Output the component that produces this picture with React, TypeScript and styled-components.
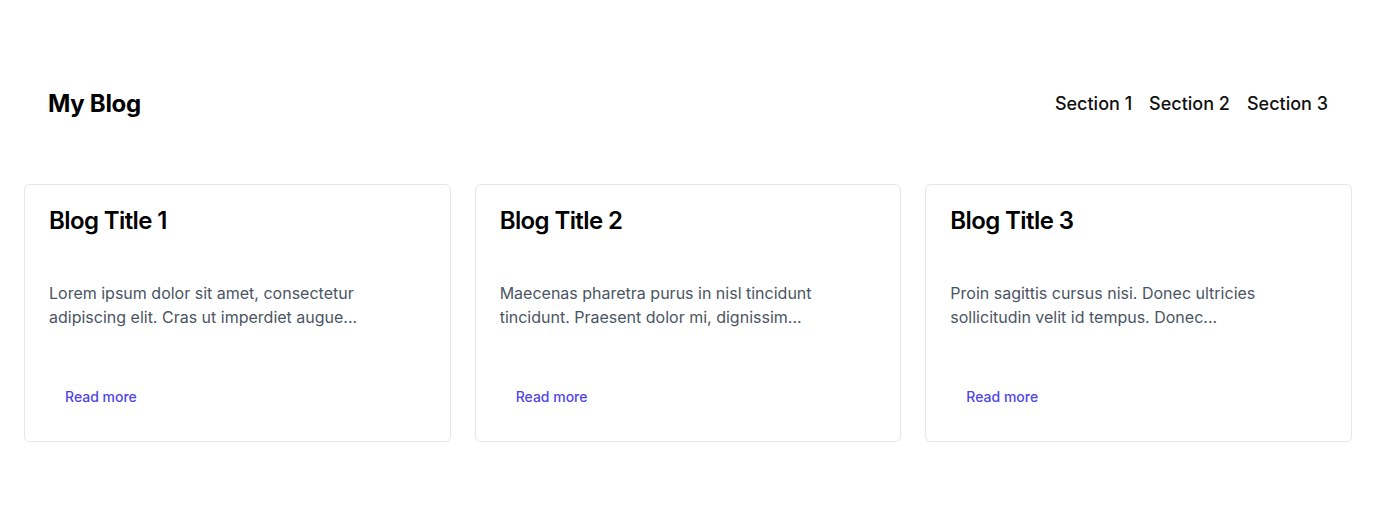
import React from "react";
import styled, { createGlobalStyle } from "styled-components";

const Global = createGlobalStyle`
  html, body { margin: 0; padding: 0; background: #ffffff; }
  body { font-family: Inter, "Noto Sans", sans-serif; color: #111; -webkit-font-smoothing: antialiased; }
  * { box-sizing: border-box; }
`;

const Page = styled.div`
  padding: 64px 24px 0;
`;

const Header = styled.header`
  display: flex;
  align-items: center;
  justify-content: space-between;
  padding: 24px 24px;
`;

const Logo = styled.h1`
  margin: 0;
  font-size: 24px;
  line-height: 32px;
  font-weight: 700;
  letter-spacing: -0.3px;
  color: #000;
`;

const Nav = styled.nav`
  display: flex;
  gap: 17px;
`;

const NavLink = styled.a`
  font-size: 18px;
  line-height: 28px;
  font-weight: 500;
  color: #111;
  text-decoration: none;
`;

const Grid = styled.div`
  display: grid;
  grid-template-columns: repeat(3, 1fr);
  gap: 24px;
  margin-top: 40px;
`;

const Card = styled.article`
  display: flex;
  flex-direction: column;
  height: 258px;
  border: 1px solid #e5e7eb;
  border-radius: 6px;
  padding: 20px 24px 26px;
  box-shadow: 0 1px 2px rgba(0, 0, 0, 0.04);
`;

const Title = styled.h2`
  margin: 0;
  font-size: 24px;
  line-height: 32px;
  font-weight: 600;
  letter-spacing: -0.025em;
  color: #000;
`;

const Excerpt = styled.p`
  margin: 44px 0 0;
  font-size: 16px;
  line-height: 24px;
  color: #4b5563;
`;

const ReadMore = styled.a`
  margin-top: auto;
  align-self: flex-start;
  padding: 8px 16px;
  font-size: 14px;
  line-height: 20px;
  font-weight: 500;
  color: #4f46e5;
  text-decoration: none;
`;

const posts = [
  {
    title: "Blog Title 1",
    text: "Lorem ipsum dolor sit amet, consectetur adipiscing elit. Cras ut imperdiet augue...",
  },
  {
    title: "Blog Title 2",
    text: "Maecenas pharetra purus in nisl tincidunt tincidunt. Praesent dolor mi, dignissim...",
  },
  {
    title: "Blog Title 3",
    text: "Proin sagittis cursus nisi. Donec ultricies sollicitudin velit id tempus. Donec...",
  },
];

export default function App() {
  return (
    <>
      <Global />
      <Page>
        <Header>
          <Logo>My Blog</Logo>
          <Nav>
            <NavLink href="#">Section 1</NavLink>
            <NavLink href="#">Section 2</NavLink>
            <NavLink href="#">Section 3</NavLink>
          </Nav>
        </Header>
        <Grid>
          {posts.map((p) => (
            <Card key={p.title}>
              <Title>{p.title}</Title>
              <Excerpt>{p.text}</Excerpt>
              <ReadMore href="#">Read more</ReadMore>
            </Card>
          ))}
        </Grid>
      </Page>
    </>
  );
}
